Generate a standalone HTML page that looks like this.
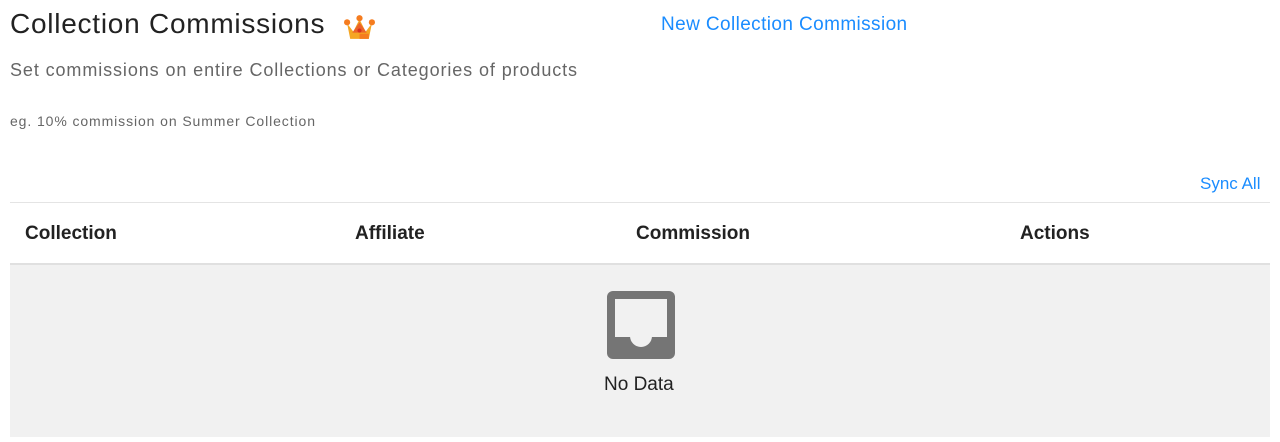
<!DOCTYPE html>
<html><head><style>
body{margin:0;width:1280px;height:442px;background:#fff;font-family:"Liberation Sans",sans-serif;position:relative;overflow:hidden}
.a{position:absolute;white-space:nowrap}
</style></head><body>
<div class="a" style="left:10px;top:8px;font-size:28px;color:#222;letter-spacing:0.75px">Collection Commissions</div>
<svg class="a" style="left:344px;top:14px" width="31" height="27" viewBox="0 0 30 26">
<path d="M3 9 L9 17 L15 5 L21 17 L27 9 L24 24 H6 Z" fill="#f5a623"/>
<path d="M8 18 L15 8 L22 18 Z" fill="#e8542b" opacity=".8"/>
<circle cx="3" cy="8" r="3" fill="#f57c1f"/><circle cx="15" cy="4" r="3" fill="#f57c1f"/><circle cx="27" cy="8" r="3" fill="#f57c1f"/>
<rect x="15" y="19" width="9" height="5" fill="#f57c1f"/>
<circle cx="15" cy="16" r="2" fill="#d6301f"/>
</svg>
<div class="a" style="left:661px;top:14px;font-size:19px;color:#1a8cff;letter-spacing:0.4px">New Collection Commission</div>
<div class="a" style="left:10px;top:60px;font-size:18px;color:#666;letter-spacing:0.9px">Set commissions on entire Collections or Categories of products</div>
<div class="a" style="left:10px;top:113px;font-size:14px;color:#666;letter-spacing:0.9px">eg. 10% commission on Summer Collection</div>
<div class="a" style="left:1200px;top:174px;font-size:17px;color:#1a8cff">Sync All</div>
<div class="a" style="left:10px;top:202px;width:1260px;height:1px;background:#e4e4e4"></div>
<div class="a" style="left:25px;top:223px;font-size:19px;font-weight:bold;color:#222">Collection</div>
<div class="a" style="left:355px;top:223px;font-size:19px;font-weight:bold;color:#222">Affiliate</div>
<div class="a" style="left:636px;top:223px;font-size:19px;font-weight:bold;color:#222">Commission</div>
<div class="a" style="left:1020px;top:223px;font-size:19px;font-weight:bold;color:#222">Actions</div>
<div class="a" style="left:10px;top:263px;width:1260px;height:172px;background:#f1f1f1;border-top:2px solid #e0e0e0"></div>
<svg class="a" style="left:607px;top:291px" width="68" height="68" viewBox="0 0 68 68">
<rect x="0" y="0" width="68" height="68" rx="6" fill="#757575"/>
<rect x="8" y="8" width="52" height="38" fill="#f1f1f1"/>
<circle cx="34" cy="45" r="11" fill="#f1f1f1"/>
</svg>
<div class="a" style="left:604px;top:374px;font-size:19px;color:#222">No Data</div>
</body></html>
